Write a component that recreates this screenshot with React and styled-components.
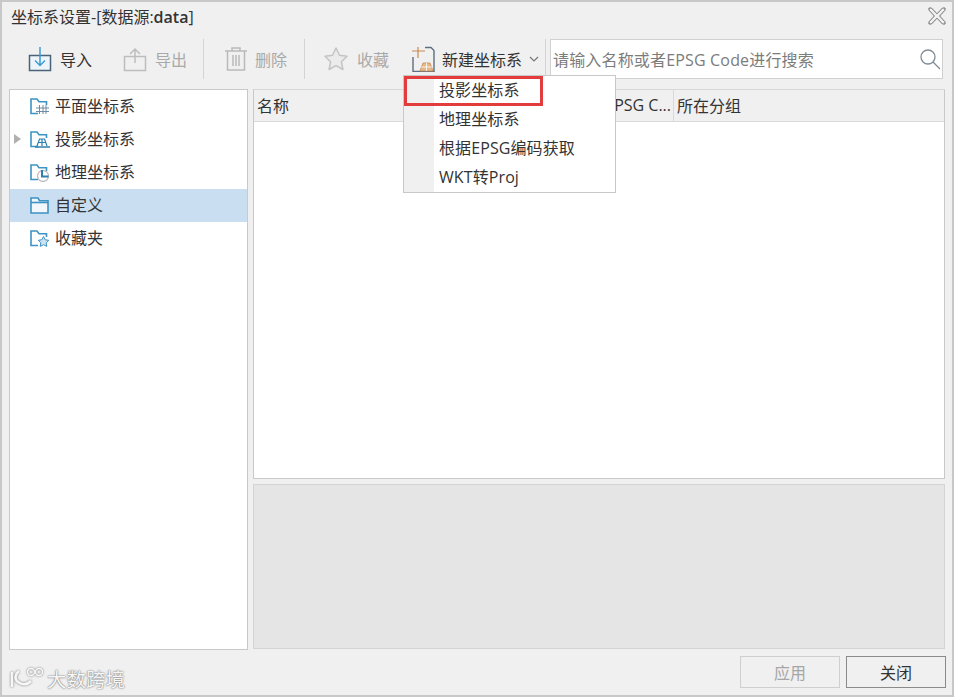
import React from 'react';
import styled, { createGlobalStyle } from 'styled-components';

const Global = createGlobalStyle`
  html, body { margin: 0; padding: 0; background: #f0f0f0; }
  body { font-family: "Open Sans", "Noto Sans CJK SC", sans-serif; }
`;

const Win = styled.div`
  position: relative;
  width: 954px;
  height: 697px;
  box-sizing: border-box;
  background: #f0f0f0;
  border: 2px solid #c8c8c8;
  display: flex;
  flex-direction: column;
  color: #333;
  overflow: hidden;
`;

const TitleBar = styled.div`
  height: 30px;
  display: flex;
  align-items: center;
  justify-content: space-between;
  padding: 0 5px 2px 9px;
  box-sizing: border-box;
  font-size: 16px;
  flex-shrink: 0;
`;

const Toolbar = styled.div`
  height: 48px;
  display: flex;
  align-items: center;
  flex-shrink: 0;
  margin-top: 3px;
`;

const ToolBtn = styled.div`
  display: flex;
  align-items: center;
  gap: ${p => p.$gap || 8}px;
  padding-left: ${p => p.$left}px;
  width: ${p => p.$w}px;
  box-sizing: border-box;
  font-size: 16px;
  color: ${p => (p.$off ? '#a9a9a9' : '#333')};
  flex-shrink: 0;
`;

const Sep = styled.div`
  width: 1px;
  height: 40px;
  background: #d4d4d4;
  flex-shrink: 0;
`;

const Search = styled.div`
  width: 393px;
  height: 40px;
  box-sizing: border-box;
  margin-left: 4px;
  background: #fff;
  border: 1px solid #d0d0d0;
  display: flex;
  align-items: center;
  justify-content: space-between;
  padding: 0 0 0 2px;
  font-size: 16px;
  letter-spacing: 0.17px;
  color: #7c7c7c;
`;

const Main = styled.div`
  flex: 1;
  display: flex;
  gap: 5px;
  padding: 6px 7px 0 7px;
  min-height: 0;
`;

const Tree = styled.div`
  width: 239px;
  box-sizing: border-box;
  background: #fff;
  border: 1px solid #c9c9c9;
  height: 561px;
  flex-shrink: 0;
`;

const TreeRow = styled.div`
  height: 33px;
  display: flex;
  align-items: center;
  position: relative;
  padding-left: 20px;
  gap: 5px;
  font-size: 16px;
  color: #333;
  background: ${p => (p.$sel ? '#c9dff1' : 'transparent')};
`;

const TreeLabel = styled.span`
  padding-bottom: 4px;
`;

const Arrow = styled.span`
  position: absolute;
  left: 4px;
  top: 11px;
  width: 0;
  height: 0;
  border-left: 7px solid #b0b0b0;
  border-top: 5.5px solid transparent;
  border-bottom: 5.5px solid transparent;
`;

const RightCol = styled.div`
  flex: 1;
  display: flex;
  flex-direction: column;
  gap: 5px;
  min-width: 0;
`;

const TableBox = styled.div`
  height: 391px;
  box-sizing: border-box;
  background: #fff;
  border: 1px solid #c9c9c9;
  border-top-color: #d8d8d8;
`;

const Head = styled.div`
  height: 31px;
  display: flex;
  background: #f0f0f0;
  border-bottom: 1px solid #d9d9d9;
  font-size: 16px;
`;

const HeadCell = styled.div`
  width: ${p => p.$w}px;
  flex: ${p => (p.$w ? 'none' : 1)};
  box-sizing: border-box;
  display: flex;
  align-items: center;
  white-space: nowrap;
  justify-content: ${p => (p.$end ? 'flex-end' : 'flex-start')};
  padding: ${p => (p.$end ? '0 2px 2px 0' : '0 0 2px 3px')};
  border-right: ${p => (p.$w ? '1px solid #d9d9d9' : 'none')};
`;

const Detail = styled.div`
  height: 165px;
  box-sizing: border-box;
  background: #e5e5e5;
  border: 1px solid #d4d4d4;
`;

const Footer = styled.div`
  height: 46px;
  position: relative;
  display: flex;
  justify-content: flex-end;
  align-items: flex-start;
  gap: 6px;
  padding: 7px 6px 0 0;
  box-sizing: border-box;
  flex-shrink: 0;
`;

const Btn = styled.div`
  width: 100px;
  height: 32px;
  box-sizing: border-box;
  display: flex;
  align-items: center;
  justify-content: center;
  font-size: 16px;
  color: ${p => (p.$off ? '#a6a6a6' : '#333')};
  border: 1px solid ${p => (p.$off ? '#cfcfcf' : '#8a8a8a')};
`;

const Watermark = styled.div`
  position: absolute;
  left: 6px;
  top: 15px;
  display: flex;
  align-items: center;
  gap: 3px;
  font-size: 19.5px;
  color: #f6f6f6;
  text-shadow: 0 0 2px #777, 0 0 1px #888;
`;

const Menu = styled.div`
  position: absolute;
  left: 401px;
  top: 73px;
  width: 213px;
  height: 118px;
  box-sizing: border-box;
  background: #fff;
  border: 1px solid #c8c8c8;
  z-index: 5;
`;

const MenuGutter = styled.div`
  position: absolute;
  left: 0;
  top: 0;
  bottom: 0;
  width: 30px;
  background: #f0f0f0;
`;

const MenuRow = styled.div`
  position: relative;
  height: 29px;
  box-sizing: border-box;
  display: flex;
  align-items: center;
  padding: 0 0 3px 35px;
  font-size: 16px;
  letter-spacing: 0.1px;
  color: #333;
`;

const Mark = styled.div`
  position: absolute;
  left: 0;
  top: 0;
  width: 139px;
  height: 30px;
  box-sizing: border-box;
  border: 3px solid #e23c3c;
  z-index: 2;
`;

const Folder = ({ children }) => (
  <svg width="20" height="18" viewBox="0 0 20 18" fill="none">
    <path d="M8 15.5H1V1h6l2 2.7h7.5V7" stroke="#3d93c4" strokeWidth="1.6" />
    {children}
  </svg>
);

const App = () => (
  <>
    <Global />
    <Win>
      <TitleBar>
        <span>坐标系设置-[数据源:<b style={{ fontWeight: 600 }}>data</b>]</span>
        <svg width="20" height="18" viewBox="0 0 20 18" fill="none" stroke="#6d6d6d" strokeWidth="1">
          <path d="M2 1h2.5L10 6.8 15.5 1H18v2.2L12.6 9 18 14.8V17h-2.5L10 11.2 4.5 17H2v-2.2L7.4 9 2 3.2z" />
        </svg>
      </TitleBar>
      <Toolbar>
        <ToolBtn $left={26} $w={121}>
          <svg width="24" height="26" viewBox="0 0 24 26" fill="none">
            <path d="M1.5 9.5h21v15h-21z" fill="#eef5fa" stroke="#4a6378" strokeWidth="1.5" />
            <path d="M12 1v18M7 14.5l5 5 5-5" stroke="#3d9bd4" strokeWidth="1.5" />
          </svg>
          导入
        </ToolBtn>
        <ToolBtn $left={0} $w={80} $off>
          <svg width="24" height="26" viewBox="0 0 24 26" fill="none" stroke="#bdbdbd" strokeWidth="1.5">
            <path d="M1.5 10.5h21v14h-21zM12 17V3M7 8l5-5 5 5" />
          </svg>
          导出
        </ToolBtn>
        <Sep />
        <ToolBtn $left={20} $w={100} $off $gap={7}>
          <svg width="24" height="26" viewBox="0 0 24 26" fill="none" stroke="#b9b9b9" strokeWidth="1.5">
            <path d="M1 5h22M8 5V2h8v3M3.5 5v19h17V5M9 9v11M12 9v11M15 9v11" />
          </svg>
          删除
        </ToolBtn>
        <Sep />
        <ToolBtn $left={18} $w={105} $off>
          <svg width="26" height="26" viewBox="0 0 26 26" fill="#ebebeb" stroke="#c4c4c4" strokeWidth="1.5" strokeLinejoin="round">
            <path d="M13 2l3.4 7.3 7.6 1-5.6 5.4 1.5 7.8-6.9-3.9-6.9 3.9 1.5-7.8L2 10.3l7.6-1z" />
          </svg>
          收藏
        </ToolBtn>
        <ToolBtn $left={1} $w={135} $gap={7}>
          <svg width="24" height="26" viewBox="0 0 24 26" fill="none">
            <path d="M14 1.5h6l3 3v21H2V11" stroke="#5d6f80" strokeWidth="1.4" />
            <path d="M1 5h13M7 1v11" stroke="#c98a52" strokeWidth="1.2" />
            <path d="M12 17h7l3 8H9z" fill="#e3b98c" stroke="#c98a52" strokeWidth="0.8" />
            <path d="M10 21h11M15.5 17v8" stroke="#fff" strokeWidth="0.8" />
          </svg>
          <span>新建坐标系</span>
          <svg width="10" height="8" viewBox="0 0 10 8" fill="none" stroke="#777" strokeWidth="1.2">
            <path d="M1 2l4 4 4-4" />
          </svg>
        </ToolBtn>
        <Sep />
        <Search>
          请输入名称或者EPSG Code进行搜索
          <svg width="24" height="24" viewBox="0 0 24 24" fill="none" stroke="#7f8c96" strokeWidth="1.3">
            <circle cx="10" cy="10" r="7" />
            <path d="M15 15l7 7" />
          </svg>
        </Search>
      </Toolbar>
      <Menu>
        <MenuGutter />
        <Mark />
        <MenuRow>投影坐标系</MenuRow>
        <MenuRow>地理坐标系</MenuRow>
        <MenuRow>根据EPSG编码获取</MenuRow>
        <MenuRow>WKT转Proj</MenuRow>
      </Menu>
      <Main>
        <Tree>
          <TreeRow>
            <Folder>
              <path d="M9.5 7v9M13 7v9M16 7v9M6 10h13M6 13.5h13" stroke="#6f8ba1" strokeWidth="1" />
            </Folder>
            <TreeLabel>平面坐标系</TreeLabel>
          </TreeRow>
          <TreeRow>
            <Arrow />
            <Folder>
              <path d="M5 16h15" stroke="#2f7fae" strokeWidth="1.5" />
              <path d="M7 15l2.5-7h5l2.5 7M12 8v7M8.5 11.5h7" stroke="#2f7fae" strokeWidth="1.2" />
            </Folder>
            <TreeLabel>投影坐标系</TreeLabel>
          </TreeRow>
          <TreeRow>
            <Folder>
              <circle cx="13" cy="12" r="5.5" stroke="#bcbcbc" strokeWidth="1.3" />
              <path d="M12 6v6.5h6.5" stroke="#2f7fae" strokeWidth="2" />
            </Folder>
            <TreeLabel>地理坐标系</TreeLabel>
          </TreeRow>
          <TreeRow $sel>
            <svg width="20" height="18" viewBox="0 0 20 18" fill="#f2f7fb" stroke="#3d93c4" strokeWidth="1.6">
              <path d="M1 16V1h7l1.5 2.7H18V16z" />
              <path d="M1 5.5h17" />
            </svg>
            <TreeLabel>自定义</TreeLabel>
          </TreeRow>
          <TreeRow>
            <Folder>
              <path d="M13.5 6.5l1.7 3.3 3.6.5-2.6 2.5.6 3.6-3.3-1.7-3.3 1.7.6-3.6-2.6-2.5 3.6-.5z" fill="#cfe3f1" stroke="#3d93c4" strokeWidth="1" />
            </Folder>
            <TreeLabel>收藏夹</TreeLabel>
          </TreeRow>
        </Tree>
        <RightCol>
          <TableBox>
            <Head>
              <HeadCell $w={346}>名称</HeadCell>
              <HeadCell $w={74} $end>EPSG C...</HeadCell>
              <HeadCell>所在分组</HeadCell>
            </Head>
          </TableBox>
          <Detail />
        </RightCol>
      </Main>
      <Footer>
        <Watermark>
          <svg width="36" height="24" viewBox="0 0 36 24" fill="none" stroke="#f6f6f6" strokeWidth="2.6" style={{ filter: 'drop-shadow(0 0 1px #777)' }}>
            <path d="M4 5v15M11 4c-4 3-5 8-1 11 4 3 9 3 13-1" />
            <circle cx="23" cy="5" r="3.5" strokeWidth="1.4" />
            <circle cx="31" cy="5" r="3.5" strokeWidth="1.4" />
          </svg>
          大数跨境
        </Watermark>
        <Btn $off>应用</Btn>
        <Btn>关闭</Btn>
      </Footer>
    </Win>
  </>
);

export default App;
